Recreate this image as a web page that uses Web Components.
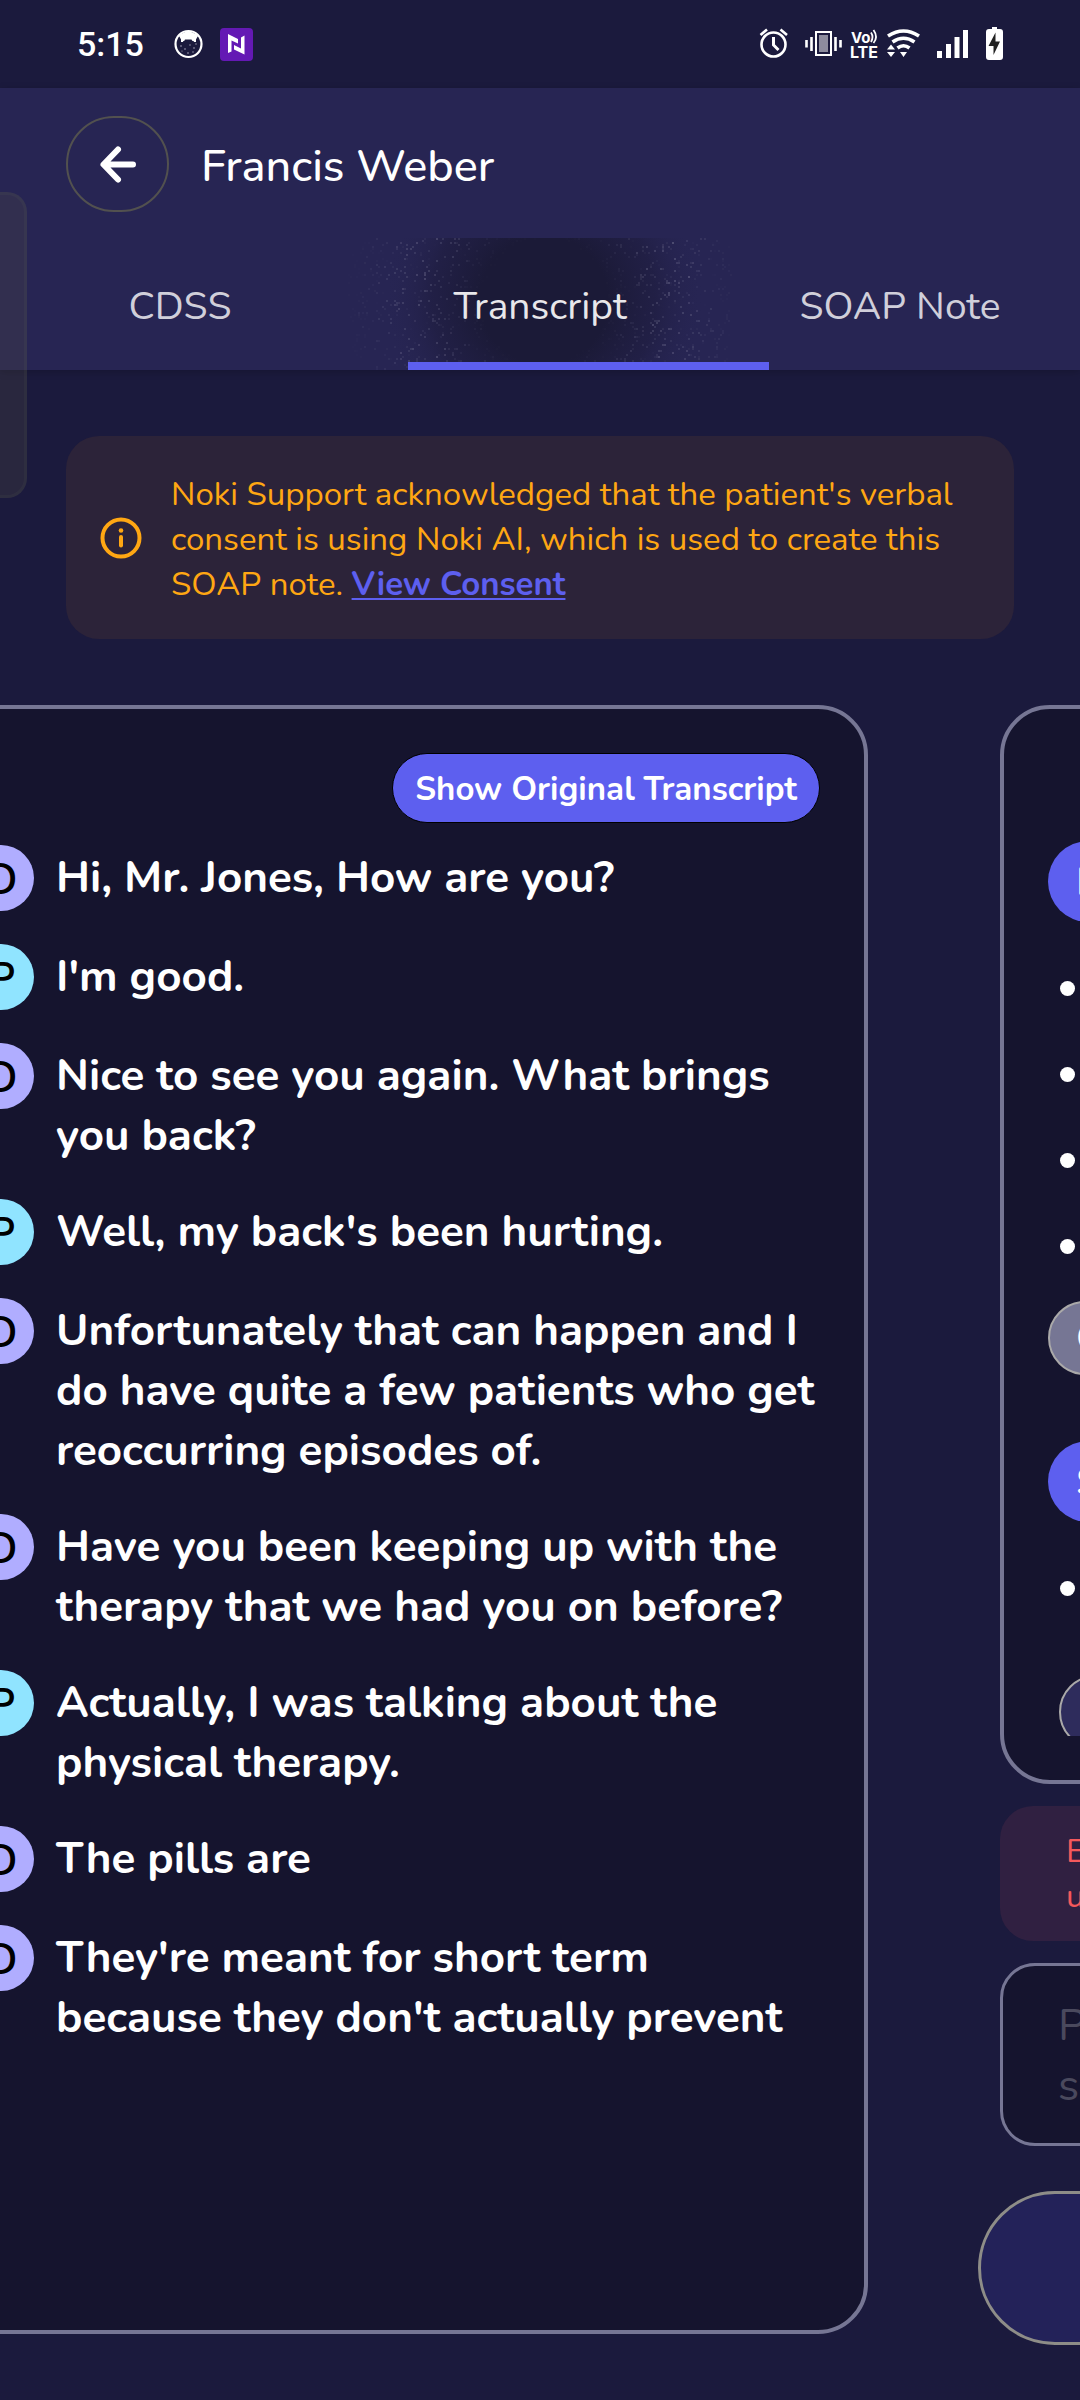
<!DOCTYPE html>
<html lang="en">
<head>
<meta charset="utf-8">
<meta name="viewport" content="width=device-width, initial-scale=1">
<title>Francis Weber – Transcript</title>
<style>
  html, body { margin: 0; }
  body {
    background: #1b1a3d;
    color: #fff;
    font-family: Nunito, "Open Sans", sans-serif;
    overflow-x: hidden;
  }
</style>
</head>
<body>
<visit-app></visit-app>

<template id="status-bar">
  <style>
    :host { display: flex; align-items: center; justify-content: space-between; height: 88px; padding: 0 64px 0 77px; color: #fff; }
    .side { display: flex; align-items: center; }
    time { font: 500 34px/40px Roboto, sans-serif; margin-right: 24px; }
    svg { display: block; height: 36px; }
    text { font-family: Inter, sans-serif; font-weight: 700; fill: #fff; }
  </style>
  <div class="side">
    <time>5:15</time>
    <svg width="49" viewBox="161 26 49 36" aria-hidden="true">
      <circle cx="181.500" cy="44" r="13" fill="none" stroke="#fff" stroke-width="2.200"/>
      <path d="M172 36 Q181 27 191 36 L188 41 Q185 42 184.500 39.500 H178 Q177.500 42 175 41 Z" fill="#fff"/>
      <path d="M175 34 V42 M188 34 V42" stroke="#fff" stroke-width="2"/>
      <g fill="#aaa9bb"><circle cx="174" cy="46" r=".8"/><circle cx="178" cy="49" r=".8"/><circle cx="183" cy="45" r=".7"/><circle cx="187" cy="48" r=".8"/><circle cx="181" cy="53" r=".8"/><circle cx="175" cy="51" r=".6"/><circle cx="189" cy="44" r=".7"/><circle cx="186" cy="52" r=".7"/></g>
    </svg>
    <svg width="38" viewBox="210 26 38 36" aria-hidden="true">
      <rect x="213" y="28" width="33" height="33" rx="4" fill="#6419b4"/>
      <path d="M221 34 L231 39 V43.500 L224.500 40.500 V51.500 L221 53 Z M237.500 35.500 V54.500 L227 49.500 V45 L234 48.500 V37.500 Z" fill="#fff"/>
    </svg>
  </div>
  <div class="side">
    <svg width="40" viewBox="758 26 40 36" aria-hidden="true">
      <g fill="none" stroke="#fff" stroke-width="2.600">
        <circle cx="773.500" cy="44.500" r="12"/>
        <path d="M760.500 35 L767 29.500 M780.500 29.500 L787 35"/>
        <path d="M773.500 37 V45 L778.500 50" stroke-width="3"/>
      </g>
    </svg>
    <svg width="50" viewBox="798 26 50 36" aria-hidden="true">
      <rect x="816" y="32" width="15" height="23" fill="none" stroke="#fff" stroke-width="2"/>
      <rect x="819" y="35" width="9" height="17" fill="#8d8c9e"/>
      <path d="M806.500 40 V47.500 M811.500 37 V51 M835.500 37 V51 M840.500 40 V47.500" stroke="#fff" stroke-width="2.600"/>
    </svg>
    <svg width="34" viewBox="848 26 34 36" role="img" aria-label="VoLTE">
      <text x="851" y="43" font-size="15">Vo</text>
      <path d="M871 32.500 Q874 37 871 42 M873.500 30 Q878.500 37 873.500 43" fill="none" stroke="#fff" stroke-width="1.800"/>
      <text x="850" y="57.500" font-size="16">LTE</text>
    </svg>
    <svg width="46" viewBox="882 26 46 36" aria-hidden="true">
      <g fill="none" stroke="#fff" stroke-width="3.600">
        <path d="M888 36 Q903.500 26 919 36"/>
        <path d="M892.500 42 Q903.500 34.500 914.500 42"/>
        <path d="M897.500 48 Q903.500 43.500 909.500 48"/>
      </g>
      <path d="M900 52 H907 L903.500 57 Z M887 49.500 L891 44.500 L895 49.500 Z M887 52 H895 L891 57 Z" fill="#fff"/>
    </svg>
    <svg width="48" viewBox="928 26 48 36" aria-hidden="true">
      <path d="M937 51 H942 V58 H937 Z M946 44 H951 V58 H946 Z M954.500 37 H959.500 V58 H954.500 Z M963 30 H968 V58 H963 Z" fill="#fff"/>
    </svg>
    <svg width="40" viewBox="976 26 40 36" aria-hidden="true">
      <path d="M992 27 H997 V29 H1000 Q1003 29 1003 32 V57 Q1003 60 1000 60 H989 Q986 60 986 57 V32 Q986 29 989 29 H992 Z" fill="#fff"/>
      <path d="M995.500 32.500 L988.500 46 H993.500 V55 L1000 41.500 H995.500 Z" fill="#222"/>
    </svg>
  </div>
</template>

<template id="page-header">
  <style>
    :host { display: block; background: #272553; padding-top: 28px; box-shadow: 0 2px 8px rgba(0, 0, 0, .2); }
    .title { display: flex; align-items: center; gap: 32px; padding: 0 66px; }
    button { display: flex; align-items: center; justify-content: center; width: 103px; height: 96px; padding: 0; border: 2px solid #52514f; border-radius: 48px; background: none; }
    h1 { margin: 0; padding-top: 6px; font-size: 45px; line-height: 60px; font-weight: 500; }
  </style>
  <div class="title">
    <button type="button" aria-label="Back">
      <svg width="40" height="40" viewBox="94 142 40 40"><path d="M114 147.500 L99.500 162.500 L114 177.500 M101 162.500 H129" fill="none" stroke="#fff" stroke-width="6" stroke-linecap="round" stroke-linejoin="round"/></svg>
    </button>
    <h1><slot name="title"></slot></h1>
  </div>
  <slot></slot>
</template>

<template id="tab-strip">
  <style>
    :host { display: flex; position: relative; margin-top: 26px; height: 132px; }
    .bar { position: absolute; bottom: 0; left: calc(100% / 3 + 48px); width: calc(100% / 3 + 1px); height: 8px; background: #5d5fef; }
  </style>
  <slot></slot>
  <div class="bar"></div>
</template>

<template id="tab-item">
  <style>
    :host { display: block; flex: 1; position: relative; }
    button { position: relative; width: 100%; height: 100%; padding: 6px 0 0; border: 0; background: none; color: #d0cfda; font: 400 39px/48px Nunito, "Open Sans", sans-serif; }
    :host([selected]) button { color: #e8e7ea; }
    .ripple { display: none; position: absolute; inset: 0 -12px; width: calc(100% + 24px); height: 100%; }
    :host([selected]) .ripple { display: block; }
  </style>
  <svg class="ripple" viewBox="0 0 384 132" preserveAspectRatio="none" aria-hidden="true">
    <defs><radialGradient id="g" gradientUnits="userSpaceOnUse" cx="196" cy="62" r="160">
      <stop offset="0" stop-color="#1b1a37"/><stop offset=".4" stop-color="#1b1a37"/><stop offset=".7" stop-color="#1f1d40" stop-opacity=".7"/><stop offset="1" stop-color="#272553" stop-opacity="0"/>
    </radialGradient></defs>
    <rect width="384" height="132" fill="url(#g)"/>
    <g class="sparks" fill="#8a88a4"></g>
  </svg>
  <button type="button" role="tab"><slot></slot></button>
</template>

<template id="consent-note">
  <style>
    :host { display: flex; align-items: center; gap: 28px; margin: 66px 66px 0; padding: 34px 33px; border-radius: 33px; background: #2c2339; color: #ffa713; font-size: 33px; line-height: 45px; }
    svg { flex: none; }
    p { margin: 0; padding-top: 2px; margin-bottom: -2px; }
    a { color: #5d5fef; font-weight: 700; text-decoration: underline; text-decoration-thickness: 2px; text-underline-offset: 3px; }
  </style>
  <svg width="44" height="44" viewBox="0 0 44 44" aria-hidden="true">
    <circle cx="22" cy="22" r="18.500" fill="none" stroke="#ffa713" stroke-width="4"/>
    <path d="M22 21 V29.500" stroke="#ffa713" stroke-width="4" stroke-linecap="round"/><circle cx="22" cy="14.500" r="2.300" fill="#ffa713"/>
  </svg>
  <p><slot></slot> <a href="#consent">View Consent</a></p>
</template>

<template id="page-pager">
  <style>
    :host { display: flex; flex: 1; overflow: hidden; margin-top: 66px; }
    .track { display: flex; flex: none; width: 100%; margin-left: -146px; }
  </style>
  <div class="track"><slot></slot></div>
</template>

<template id="transcript-page">
  <style>
    :host { display: flex; flex: 0 0 100%; box-sizing: border-box; padding: 0 66px 66px; }
    section { flex: 1; min-width: 0; display: flex; flex-direction: column; gap: 33px; padding: 44px; border: 4px solid #767694; border-radius: 50px; background: #15142e; }
    button { align-self: flex-end; height: 70px; margin-bottom: -11px; padding: 2px 22px 0; border: 1px solid #000; border-radius: 35px; background: #5d5fef; color: #fff; font: 700 33px/45px Nunito, "Open Sans", sans-serif; }
  </style>
  <section>
    <button type="button">Show Original Transcript</button>
    <slot></slot>
  </section>
</template>

<template id="chat-line">
  <style>
    :host { display: flex; gap: 22px; min-height: 66px; }
    .who { flex: none; display: flex; align-items: center; justify-content: center; box-sizing: border-box; width: 66px; height: 66px; padding-top: 4px; border-radius: 33px; background: #b0adff; color: #000; font-size: 44px; font-weight: 600; }
    :host([who="P"]) .who { background: #90e4ff; }
    p { margin: 0; padding-top: 3px; font-size: 44px; line-height: 60px; font-weight: 700; }
  </style>
  <span class="who"></span>
  <p><slot></slot></p>
</template>

<template id="soap-page">
  <style>
    :host { display: flex; flex-direction: column; gap: 22px; flex: 0 0 100%; box-sizing: border-box; padding: 0 66px 55px; }
    section { flex: 1; display: flex; padding: 44px; border: 4px solid #767694; border-radius: 50px; background: #15142e; }
    .scroll { flex: 1; contain: size; overflow: hidden; padding-top: 88px; }
    .pill, .edit, .chip { display: flex; align-items: center; box-sizing: border-box; color: #fff; font: 600 40px/48px Nunito, "Open Sans", sans-serif; }
    .pill { width: 300px; height: 81px; margin: 0; padding: 0 28px; border-radius: 41px; background: #5d5fef; }
    .edit { width: 200px; height: 74px; margin: 12px 0 66px; padding: 0 26px; border: 2px solid #aaa9a9; border-radius: 37px; background: #767694; }
    .chip { width: 300px; height: 74px; margin: 44px 0 0 11px; border: 2px solid #aaa9a9; border-radius: 37px; background: #2e2c5c; }
    ul { list-style: none; margin: 23px 0 0; padding: 0 0 0 12px; }
    li { display: flex; align-items: center; height: 86px; }
    li::before { content: ""; width: 15px; height: 15px; border-radius: 8px; background: #fff; }
    .error { margin: 0; padding: 23px 66px 22px; border-radius: 33px; background: #302041; color: #f4595c; font-size: 33px; line-height: 45px; }
    textarea { box-sizing: border-box; width: 100%; height: 183px; padding: 30px 55px 26px; border: 3px solid #767694; border-radius: 35px; background: #15142e; color: #fff; font: 400 44px/60px Nunito, "Open Sans", sans-serif; resize: none; overflow: hidden; }
    textarea::placeholder { color: #4a495d; opacity: 1; }
    .save { height: 154px; margin: 23px -22px 0; border: 3px solid #8e8d88; border-radius: 77px; background: #232259; }
  </style>
  <section><div class="scroll">
    <h2 class="pill">H</h2>
    <ul><li></li><li></li><li></li><li></li></ul>
    <button class="edit" type="button">C</button>
    <h2 class="pill">S</h2>
    <ul><li></li></ul>
    <button class="chip" type="button" aria-label="More"></button>
  </div></section>
  <p class="error">E<br>u</p>
  <textarea rows="2" aria-label="Note" placeholder="P&#10;s"></textarea>
  <button class="save" type="button" aria-label="Save"></button>
</template>

<template id="visit-app">
  <style>
    :host { display: flex; flex-direction: column; min-height: 100vh; position: relative; overflow: hidden; }
    .drawer { position: absolute; left: 0; top: 192px; width: 27px; height: 306px; box-sizing: border-box; border: 3px solid rgba(110, 105, 90, .1); border-left: 0; border-radius: 0 20px 20px 0; background: rgba(90, 85, 70, .22); }
  </style>
  <status-bar></status-bar>
  <page-header>
    <span slot="title">Francis Weber</span>
    <tab-strip role="tablist">
      <tab-item>CDSS</tab-item>
      <tab-item selected>Transcript</tab-item>
      <tab-item>SOAP Note</tab-item>
    </tab-strip>
  </page-header>
  <consent-note>Noki Support acknowledged that the patient's verbal consent is using Noki AI, which is used to create this SOAP note.</consent-note>
  <page-pager>
    <transcript-page>
      <chat-line who="D">Hi, Mr. Jones, How are you?</chat-line>
      <chat-line who="P">I'm good.</chat-line>
      <chat-line who="D">Nice to see you again. What brings you back?</chat-line>
      <chat-line who="P">Well, my back's been hurting.</chat-line>
      <chat-line who="D">Unfortunately that can happen and I do have quite a few patients who get reoccurring episodes of.</chat-line>
      <chat-line who="D">Have you been keeping up with the therapy that we had you on before?</chat-line>
      <chat-line who="P">Actually, I was talking about the physical therapy.</chat-line>
      <chat-line who="D">The pills are</chat-line>
      <chat-line who="D">They're meant for short term because they don't actually prevent</chat-line>
    </transcript-page>
    <soap-page></soap-page>
  </page-pager>
  <div class="drawer"></div>
</template>

<script>
  class Base extends HTMLElement {
    constructor() {
      super();
      this.attachShadow({ mode: "open" })
        .append(document.getElementById(this.localName).content.cloneNode(true));
    }
  }

  class TabItem extends Base {
    connectedCallback() {
      this.shadowRoot.querySelector("button").setAttribute("aria-selected", this.hasAttribute("selected"));
      if (!this.hasAttribute("selected")) return;
      // Seeded scatter of 2px sparkles on the edge of the press ripple.
      let seed = 7;
      const rnd = () => (seed = (seed * 16807) % 2147483647) / 2147483647;
      let out = "";
      for (let i = 0; i < 1200; i++) {
        const x = Math.floor(rnd() * 192) * 2, y = Math.floor(rnd() * 66) * 2;
        const d = Math.hypot(x - 196, y - 62);
        const near = 1 - Math.abs(d - 130) / 70;
        if (near > 0) out += `<rect x="${x}" y="${y}" width="2" height="2" opacity="${(near * .35 * rnd()).toFixed(2)}"/>`;
      }
      this.shadowRoot.querySelector(".sparks").innerHTML = out;
    }
  }

  class ChatLine extends Base {
    connectedCallback() {
      this.shadowRoot.querySelector(".who").textContent = this.getAttribute("who");
    }
  }

  customElements.define("status-bar", class extends Base {});
  customElements.define("page-header", class extends Base {});
  customElements.define("tab-strip", class extends Base {});
  customElements.define("tab-item", TabItem);
  customElements.define("consent-note", class extends Base {});
  customElements.define("page-pager", class extends Base {});
  customElements.define("transcript-page", class extends Base {});
  customElements.define("chat-line", ChatLine);
  customElements.define("soap-page", class extends Base {});
  customElements.define("visit-app", class extends Base {});
</script>
</body>
</html>
